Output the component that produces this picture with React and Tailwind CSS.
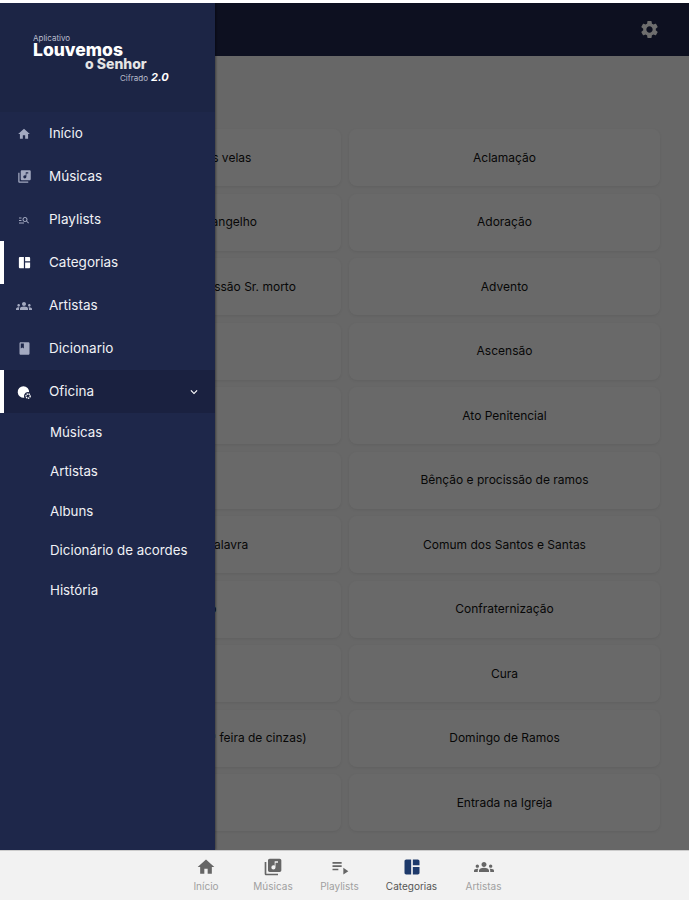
import React from 'react';
import {
  MdHome,
  MdLibraryMusic,
  MdPlaylistPlay,
  MdManageSearch,
  MdSpaceDashboard,
  MdGroups,
  MdBook,
  MdSettings,
  MdExpandMore,
} from 'react-icons/md';

// globe with a small gear on the lower right
function OficinaIcon({ size, className }) {
  return (
    <svg width={size} height={size} viewBox="0 0 24 24" className={className}>
      <path
        fill="currentColor"
        d="M11 2a10 10 0 1 0 1.6 19.9 6 6 0 0 1 -0.6 -2.9 7 7 0 0 1 8.9 -6.7A10 10 0 0 0 11 2z"
      />
      <circle cx="19" cy="19" r="3.6" fill="none" stroke="currentColor" strokeWidth="2.4" strokeDasharray="2.2 1" />
    </svg>
  );
}

const categorias = [
  'Acendimento das velas', 'Aclamação',
  'Aclamação ao Evangelho', 'Adoração',
  'Acompanhamento, procissão Sr. morto', 'Advento',
  'Abertura', 'Ascensão',
  'Amém', 'Ato Penitencial',
  'Ave Maria', 'Bênção e procissão de ramos',
  'Aclamação da palavra', 'Comum dos Santos e Santas',
  'Comunhão', 'Confraternização',
  'Corpus', 'Cura',
  'Celebração das Cinzas (4ª feira de cinzas)', 'Domingo de Ramos',
  'Crisma', 'Entrada na Igreja',
];

const menu = [
  { label: 'Início', icon: MdHome, size: 14 },
  { label: 'Músicas', icon: MdLibraryMusic, size: 15 },
  { label: 'Playlists', icon: MdManageSearch, size: 12 },
  { label: 'Categorias', icon: MdSpaceDashboard, size: 15, active: true },
  { label: 'Artistas', icon: MdGroups, size: 16 },
  { label: 'Dicionario', icon: MdBook, size: 15 },
  { label: 'Oficina', icon: OficinaIcon, size: 14, active: true, open: true },
];

const oficina = ['Músicas', 'Artistas', 'Albuns', 'Dicionário de acordes', 'História'];

const tabs = [
  { label: 'Início', icon: MdHome, width: 'w-[67px]' },
  { label: 'Músicas', icon: MdLibraryMusic, width: 'w-[67px]' },
  { label: 'Playlists', icon: MdPlaylistPlay, width: 'w-[66px]' },
  { label: 'Categorias', icon: MdSpaceDashboard, width: 'w-[78px]', active: true },
  { label: 'Artistas', icon: MdGroups, width: 'w-[66px]' },
];

function Drawer() {
  return (
    <aside className="absolute left-0 top-0 bottom-0 w-[215px] bg-[#1e274a] text-white shadow-[1px_0_2px_rgba(0,0,0,0.4)]">
      <div className="h-[109px] bg-[#1c2545] pl-[33px] pt-[30px]">
        <p className="text-[8px] leading-[10px] text-[#b9bdcc]">Aplicativo</p>
        <p className="text-[17.5px] font-extrabold leading-[14px]">Louvemos</p>
        <p className="pl-[52px] text-[14px] font-extrabold leading-[14px] text-[#e4e4e4]">o Senhor</p>
        <p className="flex items-baseline pl-[87px] leading-[13px]">
          <span className="text-[8px] text-[#b9bdcc]">Cifrado</span>
          <span className="ml-[3px] text-[11px] font-bold italic">2.0</span>
        </p>
      </div>
      <nav className="flex flex-col">
        {menu.map((item) => {
          const Icon = item.icon;
          return (
            <div
              key={item.label}
              className={`relative flex h-[43px] items-center pr-[14px] ${item.open ? 'bg-[#1a2140]' : ''}`}
            >
              {item.active && <span className="absolute bottom-0 left-0 top-0 w-[4px] bg-white" />}
              <span className="flex w-[49px] justify-center pr-[1px]">
                <Icon size={item.size} className={item.active ? 'text-white' : 'text-[#a3a9c0]'} />
              </span>
              <span className="flex-1 text-[13.5px] text-[#f0f1f5]">{item.label}</span>
              {item.open && <MdExpandMore size={14} className="text-white" />}
            </div>
          );
        })}
      </nav>
      <div className="flex flex-col">
        {oficina.map((label) => (
          <div key={label} className="flex h-[39.5px] items-center pl-[50px] text-[13.3px] text-[#f0f1f5]">
            {label}
          </div>
        ))}
      </div>
    </aside>
  );
}

export default function App() {
  return (
    <div className="flex h-[900px] flex-col bg-white font-['Inter',sans-serif]">
      <div className="h-[3px] bg-white" />
      <div className="relative flex flex-1 flex-col overflow-hidden bg-[#eeeeee]">
        <header className="flex h-[53px] items-center justify-end bg-[#1e274a] pr-[29px]">
          <MdSettings size={21} className="text-white" />
        </header>
        <main className="grid grid-cols-2 gap-x-2 gap-y-[7.5px] pl-[30px] pr-[29px] pt-[73px]">
          {categorias.map((nome) => (
            <div
              key={nome}
              className="flex h-[57px] items-center justify-center whitespace-nowrap rounded-lg bg-[#f4f4f4] text-[12px] text-[#111111] shadow-[0_1px_3px_rgba(0,0,0,0.07)]"
            >
              {nome}
            </div>
          ))}
        </main>
        <div className="absolute inset-0 bg-black/[0.57]" />
        <Drawer />
      </div>
      <footer className="flex h-[50px] shrink-0 justify-center border-t border-[#cccccc] bg-[#f2f2f2]">
        {tabs.map((tab) => {
          const Icon = tab.icon;
          return (
            <div key={tab.label} className={`flex ${tab.width} flex-col items-center pt-[6px]`}>
              <Icon size={20} className={tab.active ? 'text-[#1e3a6b]' : 'text-[#666666]'} />
              <span className={`mt-[2px] text-[10px] leading-[14px] ${tab.active ? 'text-[#555555]' : 'text-[#a0a0a0]'}`}>
                {tab.label}
              </span>
            </div>
          );
        })}
      </footer>
    </div>
  );
}
